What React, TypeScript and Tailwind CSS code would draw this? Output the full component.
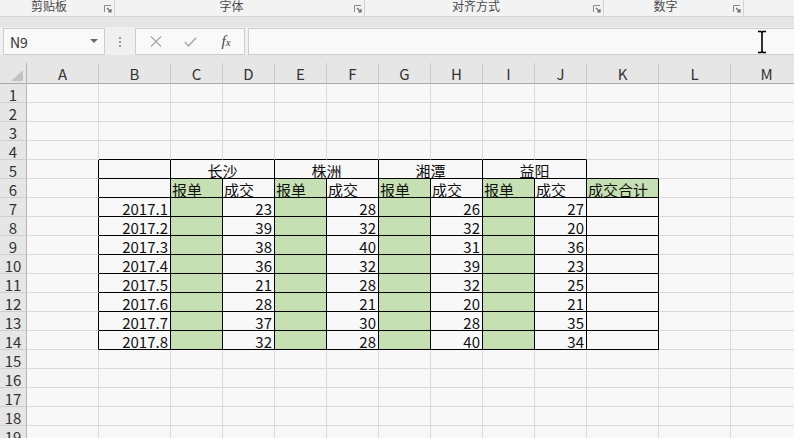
import React from 'react';

const cols = ['A', 'B', 'C', 'D', 'E', 'F', 'G', 'H', 'I', 'J', 'K', 'L', 'M'];

const data: [string, number, number, number, number][] = [
  ['2017.1', 23, 28, 26, 27],
  ['2017.2', 39, 32, 32, 20],
  ['2017.3', 38, 40, 31, 36],
  ['2017.4', 36, 32, 39, 23],
  ['2017.5', 21, 28, 32, 25],
  ['2017.6', 28, 21, 20, 21],
  ['2017.7', 37, 30, 28, 35],
  ['2017.8', 32, 28, 40, 34],
];

const groups = [
  { label: '剪贴板', w: 'w-[115px]' },
  { label: '字体', w: 'w-[250px]' },
  { label: '对齐方式', w: 'w-[239px]' },
  { label: '数字', w: 'w-[140px]' },
];

function Launcher() {
  return (
    <svg width="8" height="8" viewBox="0 0 8 8" className="block">
      <path d="M0.5 7V0.5H7" fill="none" stroke="#8a8a8a" strokeWidth="1" />
      <path d="M3 3L7 7M7 4V7H4" fill="none" stroke="#6a6a6a" strokeWidth="1.2" />
    </svg>
  );
}

function Cell({
  r,
  c,
  span = 1,
  align = 'left',
  children,
}: {
  r: number;
  c: number;
  span?: number;
  align?: 'left' | 'right' | 'center';
  children?: React.ReactNode;
}) {
  const last = c + span - 1;
  const inTable = r >= 5 && r <= 14 && ((last >= 1 && last <= 9) || (last === 10 && r >= 6));
  const rBlack = (r >= 5 && r <= 14 && last === 0) || inTable;
  const bBlack = (r === 4 && c >= 1 && c <= 9) || (r >= 5 && r <= 14 && c >= 1 && c <= 10);
  const green = (r >= 6 && r <= 14 && [2, 4, 6, 8].includes(c)) || (r === 6 && c === 10);

  return (
    <div
      className={`flex items-end border-r border-b text-[15px] leading-[15px] text-[#111] whitespace-nowrap ${
        span === 2 ? 'col-span-2' : ''
      } ${rBlack ? 'border-r-black' : 'border-r-[#dadada]'} ${bBlack ? 'border-b-black' : 'border-b-[#dadada]'} ${
        green ? 'bg-[#c6e0b4]' : 'bg-[#f8f8f8]'
      } ${align === 'right' ? 'justify-end pr-[2px]' : align === 'center' ? 'justify-center' : 'justify-start pl-[1px]'}`}
    >
      {children}
    </div>
  );
}

function RowHeader({ n }: { n: number }) {
  return (
    <div className="flex items-end justify-center bg-[#e6e6e6] border-r border-b border-r-[#b5b5b5] border-b-[#cfcfcf] text-[15px] leading-[15px] text-[#333]">
      {n}
    </div>
  );
}

function renderRow(r: number) {
  const cells: React.ReactNode[] = [<RowHeader key="h" n={r} />];
  if (r === 5) {
    cells.push(<Cell key="a" r={r} c={0} />);
    cells.push(<Cell key="b" r={r} c={1} />);
    ['长沙', '株洲', '湘潭', '益阳'].forEach((city, i) => {
      cells.push(
        <Cell key={city} r={r} c={2 + i * 2} span={2} align="center">
          {city}
        </Cell>
      );
    });
    for (let c = 10; c < 13; c++) cells.push(<Cell key={c} r={r} c={c} />);
    return cells;
  }
  for (let c = 0; c < 13; c++) {
    let content: React.ReactNode = null;
    let align: 'left' | 'right' = 'left';
    if (r === 6) {
      if (c >= 2 && c <= 9) content = c % 2 === 0 ? '报单' : '成交';
      if (c === 10) content = '成交合计';
    }
    if (r >= 7 && r <= 14) {
      const row = data[r - 7];
      if (c === 1) {
        content = row[0];
        align = 'right';
      }
      if (c === 3 || c === 5 || c === 7 || c === 9) {
        content = row[(c - 1) / 2];
        align = 'right';
      }
    }
    cells.push(
      <Cell key={c} r={r} c={c} align={align}>
        {content}
      </Cell>
    );
  }
  return cells;
}

export default function App() {
  const rows = Array.from({ length: 19 }, (_, i) => i + 1);

  return (
    <div className="relative w-[794px] h-[438px] overflow-hidden bg-[#f8f8f8] font-['Noto_Sans_CJK_SC','Noto_Sans',sans-serif]">
      {/* ribbon group labels */}
      <div className="flex h-[17px] bg-[#f3f3f3] border-b border-[#d6d6d6]">
        {groups.map((g) => (
          <div key={g.label} className={`${g.w} flex shrink-0 border-r border-[#d4d4d4]`}>
            <div className="flex-1 flex justify-center">
              <span className="text-[12px] leading-[12px] text-[#4a4a4a]">{g.label}</span>
            </div>
            <div className="w-[16px] pt-[5px] pl-[6px]">
              <Launcher />
            </div>
          </div>
        ))}
        <div className="flex-1" />
      </div>
      <div className="h-[10px] bg-[#e5e5e5]" />

      {/* formula bar */}
      <div className="flex h-[28px] pt-[1px] bg-[#f0f0f0]">
        <div className="ml-[3px] w-[102px] h-[27px] shrink-0 flex items-center justify-between pl-[6px] pr-[6px] bg-[#f9f9f9] border border-[#cdcdcd]">
          <span className="text-[14px] leading-[14px] text-[#333]">N9</span>
          <svg width="8" height="5" viewBox="0 0 8 5">
            <path d="M0 0H8L4 4Z" fill="#6b6b6b" />
          </svg>
        </div>
        <div className="w-[30px] shrink-0 flex flex-col items-center justify-center gap-[2px]">
          <div className="w-[2px] h-[2px] bg-[#9a9a9a]" />
          <div className="w-[2px] h-[2px] bg-[#9a9a9a]" />
          <div className="w-[2px] h-[2px] bg-[#9a9a9a]" />
        </div>
        <div className="w-[110px] h-[27px] shrink-0 flex items-center bg-[#f9f9f9] border border-[#cdcdcd]">
          <div className="w-[36px] flex justify-center pl-[4px]">
            <svg width="12" height="11" viewBox="0 0 12 11">
              <path d="M1 0.5L11 10.5M11 0.5L1 10.5" stroke="#a9a9a9" strokeWidth="1.2" fill="none" />
            </svg>
          </div>
          <div className="w-[36px] flex justify-center">
            <svg width="13" height="10" viewBox="0 0 13 10">
              <path d="M0.8 5L4.5 8.8L12.2 0.8" stroke="#a9a9a9" strokeWidth="1.5" fill="none" />
            </svg>
          </div>
          <div className="w-[36px] flex justify-center">
            <span className="font-['Liberation_Serif',serif] italic text-[15px] leading-[15px] text-[#444]">
              f<span className="text-[11px]">x</span>
            </span>
          </div>
        </div>
        <div className="ml-[3px] w-[600px] h-[27px] shrink-0 bg-[#f9f9f9] border border-[#cdcdcd]" />
      </div>
      <div className="h-[8px] bg-[#e5e5e5]" />

      {/* sheet grid */}
      <div className="grid grid-cols-[27px_72px_72px_repeat(8,52px)_72px_72px_72px] grid-rows-[21px] auto-rows-[19px]">
        <div className="relative bg-[#e6e6e6] border-r border-b border-r-[#b5b5b5] border-b-[#a9a9a9]">
          <svg width="12" height="11" viewBox="0 0 12 11" className="absolute right-[3px] bottom-[2px]">
            <path d="M12 0V11H0Z" fill="#c3c3c3" />
          </svg>
        </div>
        {cols.map((c) => (
          <div
            key={c}
            className="flex items-center justify-center bg-[#e6e6e6] border-r border-b border-r-[#c9c9c9] border-b-[#a9a9a9] text-[15px] leading-[15px] text-[#333]"
          >
            {c}
          </div>
        ))}
        {rows.map((r) => renderRow(r))}
      </div>

      {/* text cursor */}
      <svg width="10" height="24" viewBox="0 0 10 24" className="absolute left-[757px] top-[30px]">
        <path d="M1 1.5H4L5 2.5L6 1.5H9M5 2.5V21.5M1 22.5H4L5 21.5L6 22.5H9" stroke="#000" strokeWidth="1.6" fill="none" />
      </svg>
    </div>
  );
}
